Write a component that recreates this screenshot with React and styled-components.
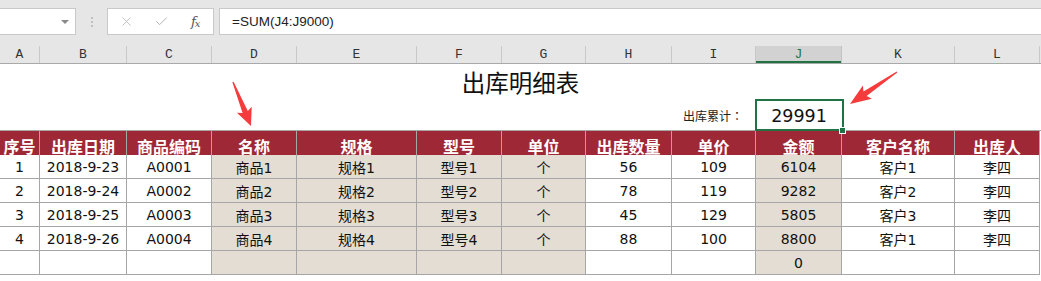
import React from "react";
import styled, { createGlobalStyle } from "styled-components";
import { X, Check } from "lucide-react";

const GlobalStyle = createGlobalStyle`
  body {
    margin: 0;
    background: #fff;
    font-family: "DejaVu Sans", "Noto Sans CJK SC", sans-serif;
  }
`;

const COLS = [40, 87, 85, 85, 120, 85, 84, 86, 84, 86, 113, 85];
const TEMPLATE = COLS.map((w) => `${w}px`).join(" ");
const LETTERS = ["A", "B", "C", "D", "E", "F", "G", "H", "I", "J", "K", "L"];
const SHADED = [3, 4, 5, 6, 9];

const HEADERS = ["序号", "出库日期", "商品编码", "名称", "规格", "型号", "单位", "出库数量", "单价", "金额", "客户名称", "出库人"];

const ROWS = [
  ["1", "2018-9-23", "A0001", "商品1", "规格1", "型号1", "个", "56", "109", "6104", "客户1", "李四"],
  ["2", "2018-9-24", "A0002", "商品2", "规格2", "型号2", "个", "78", "119", "9282", "客户2", "李四"],
  ["3", "2018-9-25", "A0003", "商品3", "规格3", "型号3", "个", "45", "129", "5805", "客户3", "李四"],
  ["4", "2018-9-26", "A0004", "商品4", "规格4", "型号4", "个", "88", "100", "8800", "客户1", "李四"],
  ["", "", "", "", "", "", "", "", "", "0", "", ""],
];

const Window = styled.div`
  position: relative;
  width: 1041px;
  height: 281px;
  overflow: hidden;
  background: #fff;
`;

const FormulaBar = styled.div`
  height: 45px;
  box-sizing: border-box;
  padding-top: 8px;
  background: #e6e6e6;
  display: flex;
  align-items: flex-start;
`;

const NameBox = styled.div`
  width: 76px;
  height: 27px;
  box-sizing: border-box;
  background: #fff;
  border: 1px solid #c9c9c9;
  border-left: 0;
  display: flex;
  align-items: center;
  justify-content: flex-end;
  padding-right: 6px;
`;

const DropArrow = styled.span`
  width: 0;
  height: 0;
  border-left: 4px solid transparent;
  border-right: 4px solid transparent;
  border-top: 4px solid #8a8a8a;
`;

const Grip = styled.div`
  width: 31px;
  height: 27px;
  display: flex;
  flex-direction: column;
  align-items: center;
  justify-content: center;
  gap: 2px;

  & span {
    width: 2px;
    height: 2px;
    background: #c0c0c0;
  }
`;

const FxBox = styled.div`
  width: 107px;
  height: 27px;
  box-sizing: border-box;
  background: #fff;
  border: 1px solid #c9c9c9;
  display: flex;
  align-items: center;
  padding-left: 11px;
  gap: 20px;
  color: #b4b4b4;
`;

const Fx = styled.span`
  font-family: "DejaVu Serif", "Liberation Serif", serif;
  font-style: italic;
  font-size: 13px;
  color: #555;
  letter-spacing: -1px;
  margin-left: 2px;

  & sub {
    font-size: 10px;
    vertical-align: -1px;
  }
`;

const FormulaInput = styled.div`
  flex: 1;
  margin-left: 5px;
  height: 27px;
  box-sizing: border-box;
  background: #fff;
  border: 1px solid #c9c9c9;
  border-right: 0;
  display: flex;
  align-items: center;
  padding-left: 12px;
  font-family: "Liberation Sans", sans-serif;
  font-size: 13.5px;
  color: #222;
`;

const ColumnHeads = styled.div`
  display: grid;
  grid-template-columns: ${TEMPLATE};
  height: 19px;
  box-sizing: border-box;
  background: #e6e6e6;
  border-bottom: 1px solid #a9a9a9;
`;

const ColumnHead = styled.div`
  margin-top: 1px;
  display: flex;
  align-items: center;
  justify-content: center;
  border-right: 1px solid ${(p) => (p.$active ? "#c2c2c2" : "#c8c8c8")};
  background: ${(p) => (p.$active ? "#d2d2d2" : "transparent")};
  box-shadow: ${(p) => (p.$active ? "inset 0 -2px 0 #217346" : "none")};
  color: ${(p) => (p.$active ? "#217346" : "#333")};
  font-family: "Liberation Mono", monospace;
  font-size: 13px;
`;

const TitleRow = styled.div`
  height: 35px;
  display: flex;
  align-items: center;
  justify-content: center;
  font-family: "Noto Sans CJK SC", sans-serif;
  font-size: 23.5px;
  color: #111;
  padding-top: 1px;
  box-sizing: border-box;
`;

const SummaryRow = styled.div`
  display: grid;
  grid-template-columns: ${TEMPLATE};
  height: 31px;
`;

const SummaryLabel = styled.div`
  grid-column: 1 / 10;
  display: flex;
  align-items: center;
  justify-content: flex-end;
  padding-right: 13px;
  padding-top: 2px;
  font-family: "Noto Sans CJK TC", "Noto Sans CJK SC", sans-serif;
  font-size: 12px;
  color: #222;
`;

const SelectedCell = styled.div`
  position: relative;
  z-index: 2;
  display: flex;
  align-items: center;
  justify-content: center;
  font-size: 17.5px;
  color: #111;
  padding-top: 2px;

  &::after {
    content: "";
    position: absolute;
    top: 0;
    left: -1px;
    right: -2px;
    bottom: -1px;
    border: 2px solid #217346;
  }
`;

const FillHandle = styled.span`
  position: absolute;
  right: -4px;
  bottom: -4px;
  width: 5px;
  height: 5px;
  background: #217346;
  border: 1px solid #fff;
  z-index: 3;
`;

const Table = styled.div`
  display: grid;
  grid-template-columns: ${TEMPLATE};
  grid-auto-rows: 24px;
  border-top: 1px solid #a6a6a6;
`;

const Cell = styled.div`
  height: ${(p) => (p.$head ? "30px" : "24px")};
  box-sizing: border-box;
  border-right: 1px solid #a6a6a6;
  border-bottom: 1px solid #a6a6a6;
  display: flex;
  align-items: center;
  justify-content: center;
  white-space: nowrap;
  background: ${(p) => (p.$head ? "#9f2837" : p.$shade ? "#e3ddd3" : "#fff")};
  color: ${(p) => (p.$head ? "#fff" : "#111")};
  font-family: ${(p) =>
    p.$head ? `"Noto Sans CJK SC", sans-serif` : `"DejaVu Sans", "Noto Sans CJK SC", sans-serif`};
  font-weight: ${(p) => (p.$head ? 700 : 400)};
  font-size: ${(p) => (p.$head ? "16px" : "14px")};
`;

const HeadRow = styled.div`
  display: contents;
  & > div {
    height: 30px;
  }
`;

const Overlay = styled.svg`
  position: absolute;
  left: 0;
  top: 0;
  pointer-events: none;
  z-index: 5;
`;

function arrowPoints([tx, ty], [px, py]) {
  const dx = px - tx;
  const dy = py - ty;
  const len = Math.hypot(dx, dy);
  const ux = dx / len;
  const uy = dy / len;
  const nx = -uy;
  const ny = ux;
  const at = (t, w) => [tx + ux * len * t + nx * w, ty + uy * len * t + ny * w];
  const pts = [at(0, 0.6), at(0.68, 2.8), at(0.63, 8), [px, py], at(0.63, -8), at(0.68, -2.8), at(0, -0.6)];
  return pts.map((p) => p.map((v) => v.toFixed(1)).join(",")).join(" ");
}

function Arrows() {
  return (
    <Overlay width="1041" height="281" viewBox="0 0 1041 281">
      <polygon points={arrowPoints([233, 82], [251, 126])} fill="#f53b3b" />
      <polygon points={arrowPoints([897, 72], [850, 104])} fill="#f53b3b" />
    </Overlay>
  );
}

export default function App() {
  return (
    <Window>
      <GlobalStyle />
      <FormulaBar>
        <NameBox>
          <DropArrow />
        </NameBox>
        <Grip>
          <span />
          <span />
          <span />
        </Grip>
        <FxBox>
          <X size={15} strokeWidth={1.3} />
          <Check size={15} strokeWidth={1.6} />
          <Fx>
            f<sub>x</sub>
          </Fx>
        </FxBox>
        <FormulaInput>=SUM(J4:J9000)</FormulaInput>
      </FormulaBar>

      <ColumnHeads>
        {LETTERS.map((l) => (
          <ColumnHead key={l} $active={l === "J"}>
            {l}
          </ColumnHead>
        ))}
      </ColumnHeads>

      <TitleRow>出库明细表</TitleRow>

      <SummaryRow>
        <SummaryLabel>出库累计：</SummaryLabel>
        <SelectedCell>
          29991
          <FillHandle />
        </SelectedCell>
      </SummaryRow>

      <Table>
        <HeadRow>
          {HEADERS.map((h) => (
            <Cell key={h} $head>
              {h}
            </Cell>
          ))}
        </HeadRow>
        {ROWS.map((row, r) =>
          row.map((v, c) => (
            <Cell key={`${r}-${c}`} $shade={SHADED.includes(c)}>
              {v}
            </Cell>
          ))
        )}
      </Table>

      <Arrows />
    </Window>
  );
}
